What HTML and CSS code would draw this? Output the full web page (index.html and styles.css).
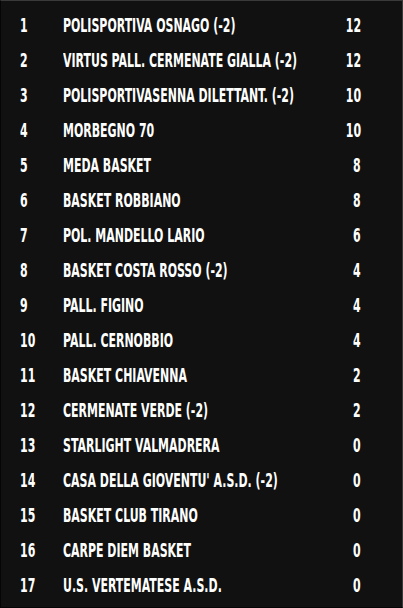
FILE: index.html
```html
<!DOCTYPE html>
<html lang="it">
<head>
<meta charset="utf-8">
<link rel="stylesheet" href="styles.css">
</head>
<body>
<div class="table">
  <div class="row"><span class="pos"><span class="t">1</span></span><span class="name"><span class="t">POLISPORTIVA OSNAGO (-2)</span></span><span class="pts"><span class="t">12</span></span></div>
  <div class="row"><span class="pos"><span class="t">2</span></span><span class="name"><span class="t">VIRTUS PALL. CERMENATE GIALLA (-2)</span></span><span class="pts"><span class="t">12</span></span></div>
  <div class="row"><span class="pos"><span class="t">3</span></span><span class="name"><span class="t">POLISPORTIVASENNA DILETTANT. (-2)</span></span><span class="pts"><span class="t">10</span></span></div>
  <div class="row"><span class="pos"><span class="t">4</span></span><span class="name"><span class="t">MORBEGNO 70</span></span><span class="pts"><span class="t">10</span></span></div>
  <div class="row"><span class="pos"><span class="t">5</span></span><span class="name"><span class="t">MEDA BASKET</span></span><span class="pts"><span class="t">8</span></span></div>
  <div class="row"><span class="pos"><span class="t">6</span></span><span class="name"><span class="t">BASKET ROBBIANO</span></span><span class="pts"><span class="t">8</span></span></div>
  <div class="row"><span class="pos"><span class="t">7</span></span><span class="name"><span class="t">POL. MANDELLO LARIO</span></span><span class="pts"><span class="t">6</span></span></div>
  <div class="row"><span class="pos"><span class="t">8</span></span><span class="name"><span class="t">BASKET COSTA ROSSO (-2)</span></span><span class="pts"><span class="t">4</span></span></div>
  <div class="row"><span class="pos"><span class="t">9</span></span><span class="name"><span class="t">PALL. FIGINO</span></span><span class="pts"><span class="t">4</span></span></div>
  <div class="row"><span class="pos"><span class="t">10</span></span><span class="name"><span class="t">PALL. CERNOBBIO</span></span><span class="pts"><span class="t">4</span></span></div>
  <div class="row"><span class="pos"><span class="t">11</span></span><span class="name"><span class="t">BASKET CHIAVENNA</span></span><span class="pts"><span class="t">2</span></span></div>
  <div class="row"><span class="pos"><span class="t">12</span></span><span class="name"><span class="t">CERMENATE VERDE (-2)</span></span><span class="pts"><span class="t">2</span></span></div>
  <div class="row"><span class="pos"><span class="t">13</span></span><span class="name"><span class="t">STARLIGHT VALMADRERA</span></span><span class="pts"><span class="t">0</span></span></div>
  <div class="row"><span class="pos"><span class="t">14</span></span><span class="name"><span class="t">CASA DELLA GIOVENTU' A.S.D. (-2)</span></span><span class="pts"><span class="t">0</span></span></div>
  <div class="row"><span class="pos"><span class="t">15</span></span><span class="name"><span class="t">BASKET CLUB TIRANO</span></span><span class="pts"><span class="t">0</span></span></div>
  <div class="row"><span class="pos"><span class="t">16</span></span><span class="name"><span class="t">CARPE DIEM BASKET</span></span><span class="pts"><span class="t">0</span></span></div>
  <div class="row"><span class="pos"><span class="t">17</span></span><span class="name"><span class="t">U.S. VERTEMATESE A.S.D.</span></span><span class="pts"><span class="t">0</span></span></div>
</div>
</body>
</html>
```
FILE: styles.css
```css
html, body {
  margin: 0;
  padding: 0;
  background: #111111;
}
.table {
  box-sizing: border-box;
  width: 403px;
  height: 608px;
  overflow: hidden;
  background: #111111;
  border-top: 1px solid #3a3a3a;
  border-right: 1px solid #3a3a3a;
  border-left: 1px solid #050505;
  border-bottom: 1px solid #050505;
  padding: 6px 0 0 0;
  font-family: "DejaVu Sans Condensed", "DejaVu Sans", sans-serif;
  font-weight: bold;
  font-size: 20px;
  color: #ffffff;
}
.row {
  display: grid;
  grid-template-columns: 43px minmax(0, 1fr) 60px;
  align-items: center;
  height: 35px;
  padding: 0 41px 0 19px;
  white-space: nowrap;
}
.name {
  min-width: 0;
}
.t {
  display: inline-block;
  transform: scaleX(0.61);
  transform-origin: left center;
}
.pts {
  text-align: right;
}
.pts .t {
  transform-origin: right center;
}
```
